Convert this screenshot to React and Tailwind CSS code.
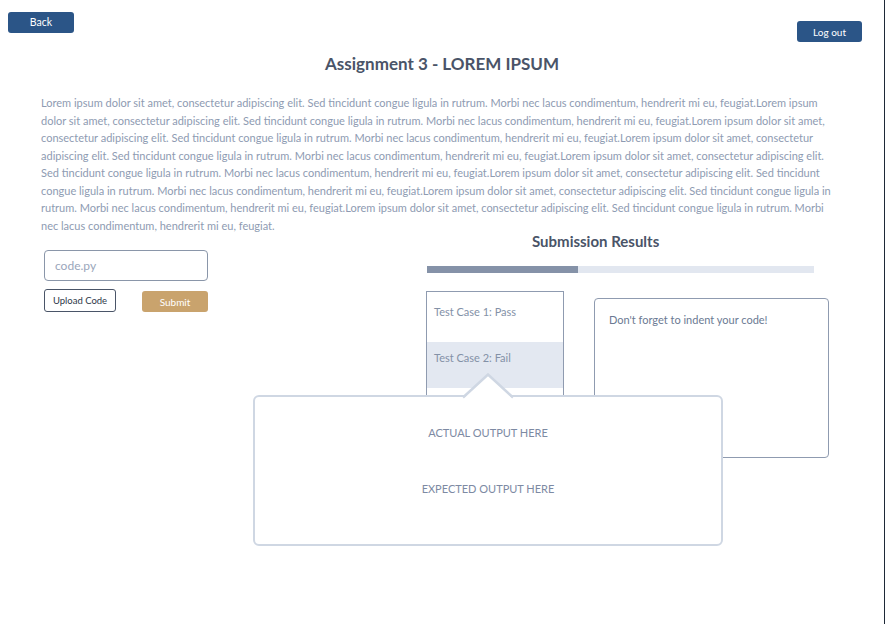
import React from 'react';

const sentence =
  'Lorem ipsum dolor sit amet, consectetur adipiscing elit. Sed tincidunt congue ligula in rutrum. Morbi nec lacus condimentum, hendrerit mi eu, feugiat.';

const testCases = [
  { label: 'Test Case 1: Pass', active: false },
  { label: 'Test Case 2: Fail', active: true },
];

const App = () => {
  const description = Array(8).fill(sentence).join('');
  const progress = 39;

  return (
    <div
      className="relative w-[885px] h-[624px] bg-white border-r border-[#1e2937] overflow-hidden"
      style={{ fontFamily: 'Lato, "Open Sans", sans-serif' }}
    >
      {/* Top bar */}
      <div className="flex justify-between items-start pt-[12px] pl-[8px] pr-[22px]">
        <button className="w-[66px] h-[21px] rounded-[3px] bg-[#2b5587] text-white text-[10.5px] leading-none">
          Back
        </button>
        <button className="mt-[9px] w-[65px] h-[21px] rounded-[3px] bg-[#2b5587] text-white text-[10px] leading-none">
          Log out
        </button>
      </div>

      <h1 className="mt-[12px] text-center text-[17px] leading-[20px] font-bold text-[#4a5468]">
        Assignment 3 - LOREM IPSUM
      </h1>

      <p className="mt-[20px] ml-[41px] w-[792px] text-[11px] leading-[17.5px] text-[#8e9bb2]">
        {description}
      </p>

      {/* Bottom section */}
      <div className="flex">
        {/* Upload column */}
        <div className="ml-[44px] pt-[16px] w-[164px]">
          <div className="h-[31px] rounded-[4px] border border-[#8a96a9] flex items-center pl-[10px] text-[12px] text-[#9aa6bb]">
            code.py
          </div>
          <div className="mt-[8px] flex items-end justify-between">
            <button className="w-[72px] h-[23px] rounded-[3px] border-[1.5px] border-[#4a5568] text-[9.5px] text-[#2d3748] leading-none">
              Upload Code
            </button>
            <button className="w-[66px] h-[21px] rounded-[3px] bg-[#c9a36d] text-white text-[10px] leading-none">
              Submit
            </button>
          </div>
        </div>

        {/* Results column */}
        <div className="ml-[218px] w-[404px]">
          <h2 className="pl-[106px] text-[15px] leading-[14px] font-bold text-[#4a5468]">
            Submission Results
          </h2>
          <div className="mt-[18px] ml-[1px] w-[387px] h-[7px] bg-[#e2e7f0]">
            <div className="h-full bg-[#8592a8]" style={{ width: `${progress}%` }} />
          </div>
          <div className="mt-[18px] flex items-start">
            <div className="w-[138px] h-[130px] border border-[#8f9bb0]">
              {testCases.map((tc) => (
                <div
                  key={tc.label}
                  className={
                    tc.active
                      ? 'h-[46px] pt-[8px] px-[7px] bg-[#e3e8f1] text-[11px] text-[#8391a7]'
                      : 'h-[50px] pt-[12px] px-[7px] text-[11px] text-[#8391a7]'
                  }
                >
                  {tc.label}
                </div>
              ))}
            </div>
            <div className="ml-[30px] mt-[7px] w-[235px] h-[160px] rounded-[4px] border border-[#8f9bb0] px-[14px] pt-[13px] text-[11px] text-[#6b7a93]">
              Don't forget to indent your code!
            </div>
          </div>
        </div>
      </div>

      {/* Output popover */}
      <div className="absolute left-[253px] top-[395px] w-[470px] h-[151px] rounded-[6px] border-2 border-[#cfd7e3] bg-white">
        <svg
          className="absolute left-[206px] top-[-24px]"
          width="54"
          height="28"
          viewBox="0 0 54 28"
        >
          <path d="M0 28 L2 26 L27 2 L52 26 L54 28 Z" fill="white" />
          <path d="M2 24.5 L27 1.5 L52 24.5" fill="none" stroke="#cfd7e3" strokeWidth="2.5" />
        </svg>
        <div className="pt-[28px] text-center text-[11px] text-[#7d8aa3] uppercase">
          Actual output here
        </div>
        <div className="mt-[39px] text-center text-[11px] text-[#7d8aa3] uppercase">
          Expected output here
        </div>
      </div>
    </div>
  );
};

export default App;
